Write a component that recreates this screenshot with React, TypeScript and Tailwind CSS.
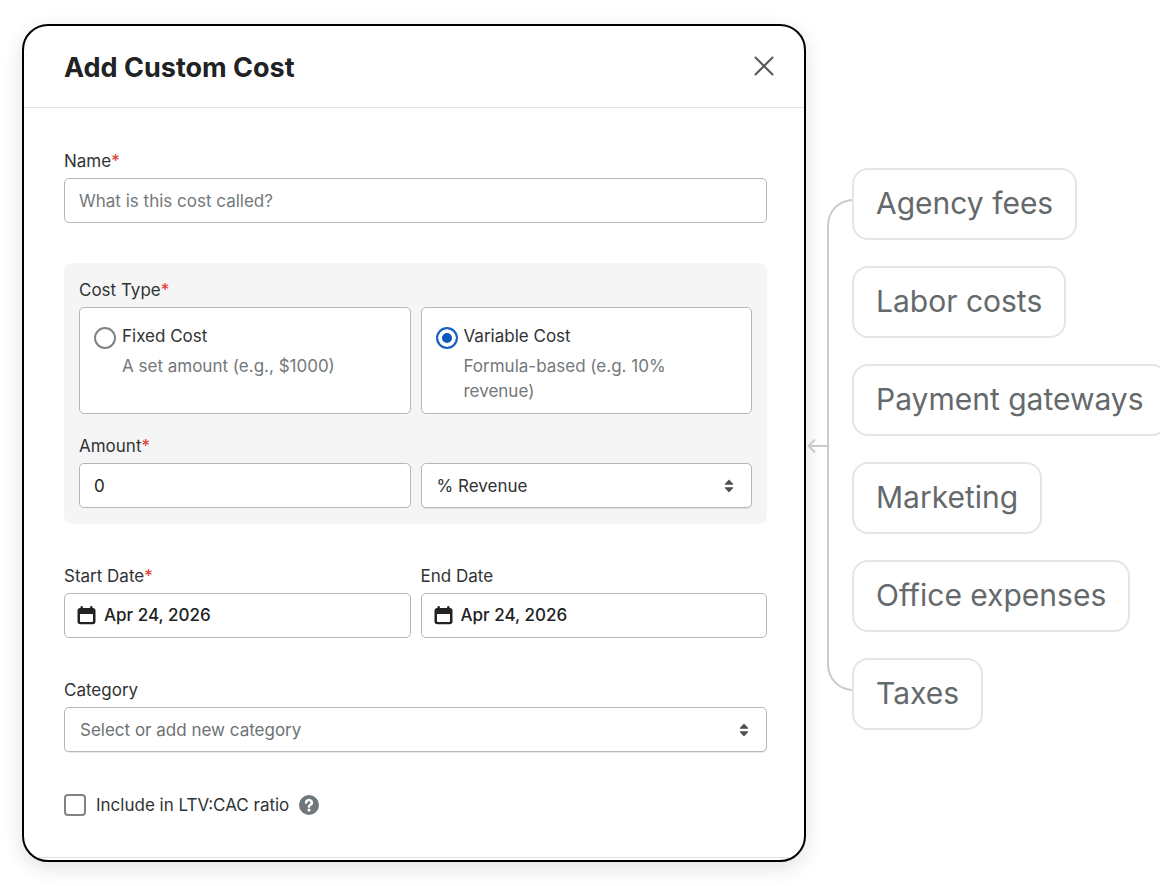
import React, { useState } from "react";

const SUGGESTIONS = [
  "Agency fees",
  "Labor costs",
  "Payment gateways",
  "Marketing",
  "Office expenses",
  "Taxes",
];

const COST_TYPES = [
  { id: "fixed", title: "Fixed Cost", hint: "A set amount (e.g., $1000)" },
  { id: "variable", title: "Variable Cost", hint: "Formula-based (e.g. 10% revenue)" },
];

function Label({ htmlFor, required, children }: { htmlFor: string; required?: boolean; children: React.ReactNode }) {
  return (
    <label htmlFor={htmlFor} className="block w-fit pt-px text-[17px] leading-[23px] text-[#303335]">
      {children}
      {required ? <span className="text-[#e0322c]">*</span> : null}
    </label>
  );
}

function SelectArrows() {
  return (
    <svg className="pointer-events-none absolute top-1/2 right-[18px] -translate-y-1/2" width="10" height="14" viewBox="0 0 10 14" fill="#4a4f52">
      <path d="M5 0.6 9.200 5q.3.8-.5.8H1.300q-.8 0-.5-.8z" />
      <path d="M5 13.400 9.200 9q.3-.8-.5-.8H1.300q-.8 0-.5.8z" />
    </svg>
  );
}

function DateField({ id, value, onChange }: { id: string; value: string; onChange: (v: string) => void }) {
  return (
    <div className="flex h-[45px] items-center gap-2 rounded-[5px] border border-[#b3b7b9] bg-white px-3 focus-within:border-[#005bd3]">
      <svg className="shrink-0" width="19" height="20" viewBox="0 0 19 20" fill="#202223">
        <path
          fillRule="evenodd"
          d="M3.500 1.200a1.200 1.200 0 0 1 2.400 0V2h7.200v-.8a1.200 1.200 0 0 1 2.400 0V2h.3A2.700 2.700 0 0 1 18.500 4.700V15.600A2.700 2.700 0 0 1 15.800 18.300H3.200A2.700 2.700 0 0 1 .5 15.600V4.700A2.700 2.700 0 0 1 3.200 2h.3zM3 8v7.200a.8.8 0 0 0 .8.8h11.400a.8.8 0 0 0 .8-.8V8z"
        />
      </svg>
      <input
        id={id}
        type="text"
        value={value}
        onChange={(e) => onChange(e.target.value)}
        className="w-full min-w-0 bg-transparent text-[17px] font-medium text-[#202223] outline-none"
      />
    </div>
  );
}

export default function App() {
  const [name, setName] = useState("");
  const [costType, setCostType] = useState("variable");
  const [amount, setAmount] = useState("0");
  const [startDate, setStartDate] = useState("Apr 24, 2026");
  const [endDate, setEndDate] = useState("Apr 24, 2026");
  const [includeRatio, setIncludeRatio] = useState(false);

  return (
    <div className="flex min-h-screen items-start overflow-hidden bg-white py-6 pl-[22px] font-['Inter',sans-serif]">
      {/* Dialog */}
      <form className="min-w-0 flex-1 overflow-hidden rounded-[26px] border-2 border-black bg-white shadow-[0_6px_20px_rgba(0,0,0,0.12)]">
        <header className="flex h-[82px] items-center justify-between border-b border-[#e1e3e5] pt-0.5 pr-[30px] pl-10">
          <h1 className="text-[27px] leading-8 font-bold text-[#202223]">Add Custom Cost</h1>
          <button type="button" aria-label="Close" className="pb-1">
            <svg width="20" height="20" viewBox="0 0 20 20" fill="none" stroke="#54585b" strokeWidth="2" strokeLinecap="round">
              <path d="M1.500 1.500 18.500 18.500M18.500 1.500 1.500 18.500" />
            </svg>
          </button>
        </header>

        <div className="flex flex-col gap-10 pt-[41px] pr-[37px] pb-[39px] pl-10">
          <div className="flex flex-col gap-[5px]">
            <Label htmlFor="name" required>Name</Label>
            <input
              id="name"
              type="text"
              value={name}
              onChange={(e) => setName(e.target.value)}
              placeholder="What is this cost called?"
              className="h-[45px] w-full rounded-[5px] border border-[#b3b7b9] bg-white px-3.5 text-[17px] text-[#202223] outline-none placeholder:text-[#73787b]"
            />
          </div>

          {/* Cost type and amount */}
          <div className="rounded-lg bg-[#f5f5f5] px-[15px] pt-[15px] pb-4">
            <fieldset>
              <legend className="mb-[5px] pt-px text-[17px] leading-[23px] text-[#303335]">
                Cost Type<span className="text-[#e0322c]">*</span>
              </legend>
              <div className="grid grid-cols-2 gap-2.5">
                {COST_TYPES.map((type) => (
                  <label
                    key={type.id}
                    className="flex items-start gap-1.5 rounded-[5px] border border-[#b3b7b9] bg-white px-3.5 pt-4 pb-[9px] text-[17px] leading-[25px]"
                  >
                    <input
                      type="radio"
                      name="costType"
                      value={type.id}
                      checked={costType === type.id}
                      onChange={() => setCostType(type.id)}
                      className="mt-[3px] size-[22px] shrink-0 appearance-none rounded-full border-2 border-[#7d8386] bg-white checked:border-[#1a62bd] checked:bg-[#0a58b8] checked:shadow-[inset_0_0_0_4px_white]"
                    />
                    <span className="flex flex-col gap-[5px]">
                      <span className="text-[#303335]">{type.title}</span>
                      <span className="text-[#73787b]">{type.hint}</span>
                    </span>
                  </label>
                ))}
              </div>
            </fieldset>

            <div className="mt-5 flex flex-col gap-[5px]">
              <Label htmlFor="amount" required>Amount</Label>
              <div className="grid grid-cols-2 gap-2.5">
                <input
                  id="amount"
                  type="text"
                  inputMode="decimal"
                  value={amount}
                  onChange={(e) => setAmount(e.target.value)}
                  className="h-[45px] w-full min-w-0 rounded-[5px] border border-[#b3b7b9] bg-white px-3.5 text-[17px] text-[#202223] outline-none"
                />
                <div className="relative">
                  <select
                    aria-label="Amount unit"
                    defaultValue="revenue"
                    className="h-[45px] w-full appearance-none rounded-[5px] border border-[#b3b7b9] bg-white px-[15px] pt-0.5 text-[17px] text-[#303335] shadow-[0_1px_0_rgba(0,0,0,0.08)] outline-none"
                  >
                    <option value="revenue">% Revenue</option>
                  </select>
                  <SelectArrows />
                </div>
              </div>
            </div>
          </div>

          {/* Date range */}
          <div className="grid grid-cols-2 gap-2.5">
            <div className="flex flex-col gap-[5px]">
              <Label htmlFor="start-date" required>Start Date</Label>
              <DateField id="start-date" value={startDate} onChange={setStartDate} />
            </div>
            <div className="flex flex-col gap-[5px]">
              <Label htmlFor="end-date">End Date</Label>
              <DateField id="end-date" value={endDate} onChange={setEndDate} />
            </div>
          </div>

          <div className="flex flex-col gap-[5px]">
            <Label htmlFor="category">Category</Label>
            <div className="relative">
              <select
                id="category"
                defaultValue=""
                className="h-[45px] w-full appearance-none rounded-[5px] border border-[#b3b7b9] bg-white px-[15px] pt-0.5 text-[17px] text-[#6d7275] shadow-[0_1px_0_rgba(0,0,0,0.08)] outline-none"
              >
                <option value="">Select or add new category</option>
              </select>
              <SelectArrows />
            </div>
          </div>

          <div className="flex h-[26px] items-center">
            <input
              id="include-ratio"
              type="checkbox"
              checked={includeRatio}
              onChange={(e) => setIncludeRatio(e.target.checked)}
              className="size-[22px] shrink-0 appearance-none rounded-[4px] border-2 border-[#7d8386] bg-white checked:bg-[#0a58b8]"
            />
            <label htmlFor="include-ratio" className="pl-2.5 text-[17px] leading-[23px] text-[#303335]">
              Include in LTV:CAC ratio
            </label>
            <button type="button" aria-label="About the LTV:CAC ratio" className="ml-2.5">
              <svg width="20" height="20" viewBox="0 0 20 20" fill="none">
                <circle cx="10" cy="10" r="10" fill="#70777a" />
                <path d="M7.100 7.500a2.900 2.600 0 1 1 4.600 2.200c-1 .7-1.700 1-1.700 1.900" stroke="#fff" strokeWidth="2.600" strokeLinecap="round" />
                <circle cx="10" cy="15" r="1.600" fill="#fff" />
              </svg>
            </button>
          </div>
        </div>
        <div className="h-[3px] border-t border-[#e1e3e5]" />
      </form>

      {/* Bracket that ties the suggestions to the dialog */}
      <svg className="mt-36 shrink-0" width="46" height="562" viewBox="0 0 46 562" fill="none" stroke="#c9cacb" strokeWidth="2">
        <path d="M48 32C33 32 22 43 22 58V496C22 511 33 522 48 522" />
        <path d="M22 278H3M9 271.500 2.500 278 9 284.500" />
      </svg>

      <ul className="mt-36 flex w-[308px] shrink-0 flex-col items-start gap-[26px]">
        {SUGGESTIONS.map((item) => (
          <li
            key={item}
            className="flex h-[72px] items-center rounded-2xl border-2 border-[#e4e5e5] bg-white px-[22px] pb-0.5 text-[30px] leading-9 whitespace-nowrap text-[#64696c]"
          >
            {item}
          </li>
        ))}
      </ul>
    </div>
  );
}
